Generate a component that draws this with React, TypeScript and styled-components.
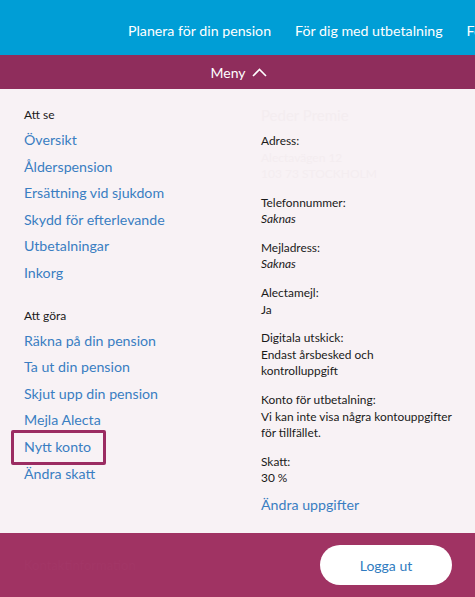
import React from "react";
import styled, { createGlobalStyle } from "styled-components";

const Global = createGlobalStyle`
  html, body { margin: 0; padding: 0; }
  body { font-family: Lato, "Open Sans", sans-serif; background: #f8f2f5; }
  #root { width: 475px; height: 597px; overflow: hidden; }
`;

const Page = styled.div`
  display: flex;
  flex-direction: column;
  height: 597px;
`;

const TopBar = styled.header`
  height: 55px;
  background: #009ed6;
  display: flex;
  align-items: center;
  padding-left: 128px;
  gap: 24px;
  overflow: hidden;
  white-space: nowrap;
`;

const NavItem = styled.a`
  color: #fff;
  font-size: 14.2px;
  text-decoration: none;
  padding-top: 6px;
`;

const MenuBar = styled.div`
  height: 34px;
  background: #8f2d5c;
  display: flex;
  align-items: center;
  justify-content: center;
  gap: 6px;
  color: #fff;
  font-size: 14px;
  padding-left: 2px;
`;

const Content = styled.main`
  flex: 1;
  display: grid;
  grid-template-columns: 237px 1fr;
  padding: 16px 0 0 24px;
  background: #f8f2f5;
`;

const Col = styled.div`
  display: flex;
  flex-direction: column;
`;

const SectionTitle = styled.div<{ $gap?: number }>`
  font-size: 12px;
  line-height: 20px;
  color: #1a1a1a;
  margin-top: ${(p) => p.$gap ?? 0}px;
  margin-bottom: 2px;
`;

const NavLink = styled.a<{ $focused?: boolean }>`
  position: relative;
  align-self: flex-start;
  font-size: 14.2px;
  line-height: 26.6px;
  color: #3a7ec2;
  text-decoration: none;
  ${(p) =>
    p.$focused &&
    `&::after {
      content: "";
      position: absolute;
      inset: -4px -15px -4px -13px;
      border: 3px solid #9b2c62;
      border-radius: 2px;
    }`}
`;

const Faint = styled.div<{ $size?: number }>`
  font-size: ${(p) => p.$size ?? 12}px;
  line-height: ${(p) => (p.$size ? 20 : 16.5)}px;
  color: #f4edf0;
`;

const Group = styled.div<{ $first?: boolean }>`
  display: flex;
  flex-direction: column;
  margin-top: ${(p) => (p.$first ? 8 : 12)}px;
`;

const Label = styled.div`
  font-size: 11.9px;
  line-height: 16.6px;
  color: #1a1a1a;
`;

const Value = styled.div<{ $italic?: boolean }>`
  font-size: 11.9px;
  line-height: 16.6px;
  color: #1a1a1a;
  font-style: ${(p) => (p.$italic ? "italic" : "normal")};
`;

const EditLink = styled.a`
  font-size: 14.2px;
  line-height: 20px;
  color: #3a7ec2;
  margin-top: 8px;
  text-decoration: none;
`;

const Footer = styled.footer`
  height: 64px;
  background: #a03363;
  display: flex;
  align-items: center;
  justify-content: space-between;
  padding: 0 23px 0 24px;
`;

const FooterText = styled.span`
  font-size: 13px;
  color: #a23666;
`;

const LogoutButton = styled.button`
  width: 132px;
  height: 40px;
  border: none;
  border-radius: 20px;
  background: #fff;
  color: #2f7bc0;
  font-family: Lato, sans-serif;
  font-size: 14px;
  cursor: pointer;
`;

const Chevron = () => (
  <svg width="15" height="9" viewBox="0 0 15 9" fill="none">
    <path d="M1 8 L7.5 1.5 L14 8" stroke="#fff" strokeWidth="1.6" />
  </svg>
);

export default function App() {
  const seeLinks = [
    "Översikt",
    "Ålderspension",
    "Ersättning vid sjukdom",
    "Skydd för efterlevande",
    "Utbetalningar",
    "Inkorg",
  ];
  const doLinks = [
    "Räkna på din pension",
    "Ta ut din pension",
    "Skjut upp din pension",
    "Mejla Alecta",
    "Nytt konto",
    "Ändra skatt",
  ];
  return (
    <Page>
      <Global />
      <TopBar>
        <NavItem>Planera för din pension</NavItem>
        <NavItem>För dig med utbetalning</NavItem>
        <NavItem>För dig med efterlevandeskydd</NavItem>
      </TopBar>
      <MenuBar>
        Meny <Chevron />
      </MenuBar>
      <Content>
        <Col>
          <SectionTitle>Att se</SectionTitle>
          {seeLinks.map((l) => (
            <NavLink key={l}>{l}</NavLink>
          ))}
          <SectionTitle $gap={19}>Att göra</SectionTitle>
          {doLinks.map((l) => (
            <NavLink key={l} $focused={l === "Nytt konto"}>
              {l}
            </NavLink>
          ))}
        </Col>
        <Col>
          <Faint $size={15}>Peder Premie</Faint>
          <Group $first>
            <Label>Adress:</Label>
            <Faint>Alectavägen 12</Faint>
            <Faint>103 73 STOCKHOLM</Faint>
          </Group>
          <Group>
            <Label>Telefonnummer:</Label>
            <Value $italic>Saknas</Value>
          </Group>
          <Group>
            <Label>Mejladress:</Label>
            <Value $italic>Saknas</Value>
          </Group>
          <Group>
            <Label>Alectamejl:</Label>
            <Value>Ja</Value>
          </Group>
          <Group>
            <Label>Digitala utskick:</Label>
            <Value>Endast årsbesked och</Value>
            <Value>kontrolluppgift</Value>
          </Group>
          <Group>
            <Label>Konto för utbetalning:</Label>
            <Value>Vi kan inte visa några kontouppgifter</Value>
            <Value>för tillfället.</Value>
          </Group>
          <Group>
            <Label>Skatt:</Label>
            <Value>30 %</Value>
          </Group>
          <EditLink>Ändra uppgifter</EditLink>
        </Col>
      </Content>
      <Footer>
        <FooterText>Kontaktinformation</FooterText>
        <LogoutButton>Logga ut</LogoutButton>
      </Footer>
    </Page>
  );
}
